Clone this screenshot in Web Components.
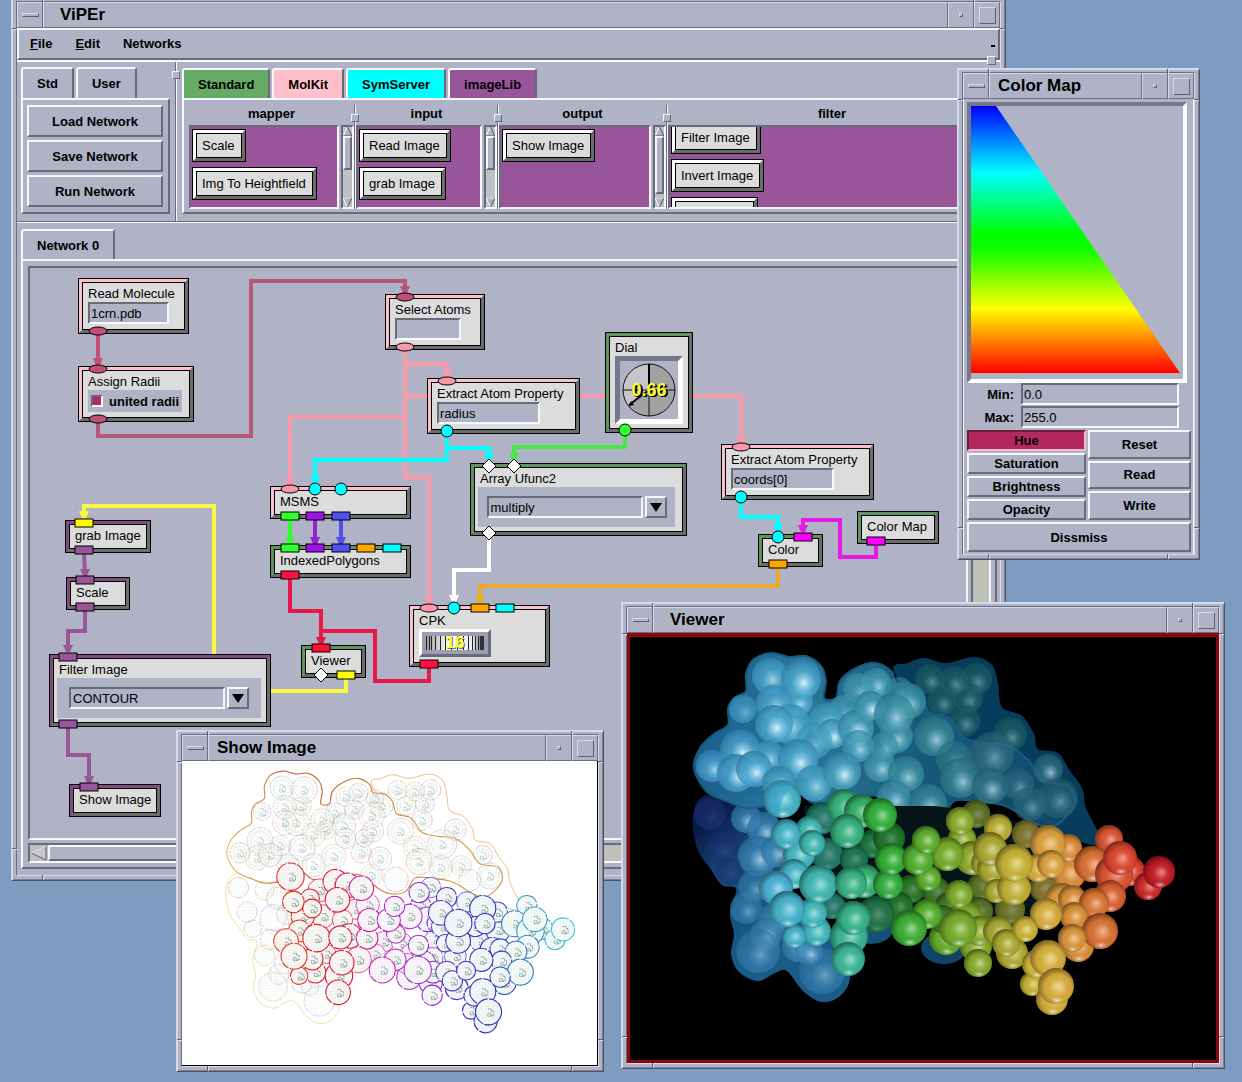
<!DOCTYPE html>
<html lang="en">
<head>
<meta charset="utf-8">
<title>ViPEr</title>
<style>
  :root {
    --panel: #afb3c5;
    --light: #f6f8ff;
    --dark: #686c7a;
    --rim: #d6d9ea;
    --node: #dcdcdc;
  }
  body {
    margin: 0;
    font: 13px/17px "Liberation Sans", Arial, sans-serif;
    color: #000;
  }
</style>
</head>
<body>
<desk-top>
  <mwm-window heading="ViPEr" style="left: 11px; right: 236px; top: -3px">
    <viper-app></viper-app>
  </mwm-window>

  <mwm-window heading="Color Map" compact style="right: 42px; top: 68px; width: 243px">
    <color-map></color-map>
  </mwm-window>

  <mwm-window heading="Show Image" compact style="left: 176px; top: 730px; width: 428px">
    <contour-view></contour-view>
  </mwm-window>

  <mwm-window heading="Viewer" style="left: 621px; right: 17px; top: 602px">
    <molecule-view></molecule-view>
  </mwm-window>
</desk-top>

<script>
// Attach an open shadow root and fill it from a template
function render(el, html) {
  const template = document.createElement("template");
  template.innerHTML = html;
  el.attachShadow({ mode: "open" }).appendChild(template.content.cloneNode(true));
}

class DeskTop extends HTMLElement {
  connectedCallback() {
    render(this, `
      <style>
        :host {
          display: block;
          position: relative;
          min-height: 100vh;
          overflow: hidden;
          background: #7c9dc0;
        }
      </style>
      <slot></slot>
    `);
  }
}
customElements.define("desk-top", DeskTop);

class MwmWindow extends HTMLElement {
  connectedCallback() {
    render(this, `
      <style>
        :host {
          display: block;
          position: absolute;
          box-sizing: border-box;
          padding: 3px 4px 4px;
          background: var(--panel);
          border: 1px solid;
          border-color: var(--rim) #4e5464 #4e5464 var(--rim);
          box-shadow: inset 1px 1px var(--rim), inset -1px -1px #7c8090;
        }
        .inner {
          border: 1px solid;
          border-color: #6a6e80 var(--rim) var(--rim) #6a6e80;
        }
        header {
          display: grid;
          grid-template-columns: 26px 1fr 26px 26px;
          height: 26px;
        }
        header > * {
          box-sizing: border-box;
          margin: 0;
          padding: 0;
          display: flex;
          align-items: center;
          justify-content: center;
          background: var(--panel);
          border: 1px solid;
          border-color: var(--rim) #6a6e80 #6a6e80 var(--rim);
        }
        h1 {
          justify-content: flex-start;
          padding-left: 16px;
          font: bold 17px/20px "Liberation Sans", Arial, sans-serif;
        }
        :host([compact]) h1 { padding-left: 8px; }
        i {
          box-sizing: border-box;
          border: 1px solid;
          border-color: var(--rim) #5c6070 #5c6070 var(--rim);
        }
        .bar { width: 17px; height: 4px; }
        .dot { width: 4px; height: 4px; }
        .box { width: 17px; height: 17px; }
        /* resize handle marks at the corners of the frame */
        .mark { position: absolute; background: #5c6070; }
        .mark.v { width: 1px; height: 5px; box-shadow: 1px 0 var(--rim); }
        .mark.h { width: 5px; height: 1px; box-shadow: 0 1px var(--rim); }
        .t { top: 0; } .b { bottom: 0; } .l { left: 0; } .r { right: 0; }
        .v.w { left: 30px; } .v.e { right: 31px; }
        .h.n { top: 30px; } .h.s { bottom: 31px; }
      </style>
      <div class="inner">
        <header>
          <button aria-label="Window menu"><i class="bar"></i></button>
          <h1></h1>
          <button aria-label="Minimize"><i class="dot"></i></button>
          <button aria-label="Maximize"><i class="box"></i></button>
        </header>
        <slot></slot>
      </div>
      <b class="mark v t w"></b><b class="mark v t e"></b>
      <b class="mark v b w"></b><b class="mark v b e"></b>
      <b class="mark h l n"></b><b class="mark h r n"></b>
      <b class="mark h l s"></b><b class="mark h r s"></b>
    `);
    this.shadowRoot.querySelector("h1").textContent = this.getAttribute("heading");
  }
}
customElements.define("mwm-window", MwmWindow);

class MotifButton extends HTMLElement {
  connectedCallback() {
    render(this, `
      <style>
        :host { display: grid; }
        button {
          font: bold 13px/17px "Liberation Sans", Arial, sans-serif;
          padding: 0;
          color: #000;
          background: var(--panel);
          border: 2px solid;
          border-color: var(--light) var(--dark) var(--dark) var(--light);
        }
        :host([pressed]) button {
          background: #b3295e;
          border-color: #701c3c #f4b8cc #f4b8cc #701c3c;
        }
      </style>
      <button><slot></slot></button>
    `);
  }
}
customElements.define("motif-button", MotifButton);

class MotifTab extends HTMLElement {
  connectedCallback() {
    render(this, `
      <style>
        :host { display: block; }
        button {
          display: block;
          box-sizing: border-box;
          height: 100%;
          padding: 0 14px;
          font: bold 13px/17px "Liberation Sans", Arial, sans-serif;
          color: #000;
          background: var(--tab, var(--panel));
          border: 2px solid;
          border-color: var(--light) var(--dark) transparent var(--light);
          border-bottom: 0;
          border-radius: 3px 3px 0 0;
        }
      </style>
      <button role="tab"><slot></slot></button>
    `);
  }
}
customElements.define("motif-tab", MotifTab);

class TabPage extends HTMLElement {
  connectedCallback() {
    render(this, `
      <style>
        :host { display: flex; flex-direction: column; min-width: 0; }
        .tabs { display: flex; gap: 2px; height: var(--tab-height, 31px); }
        .page {
          flex: 1;
          min-width: 0;
          border: 2px solid;
          border-color: var(--light) var(--dark) var(--dark) var(--light);
        }
      </style>
      <div class="tabs" role="tablist"><slot name="tab"></slot></div>
      <div class="page"><slot></slot></div>
    `);
  }
}
customElements.define("tab-page", TabPage);

// Vertical scrollbar of a library pane, "size" is the thumb share in percent
class PaneScroll extends HTMLElement {
  connectedCallback() {
    render(this, `
      <style>
        :host {
          display: flex;
          flex-direction: column;
          box-sizing: border-box;
          width: 13px;
          background: #bfc1c4;
          border: 2px solid;
          border-color: var(--dark) var(--light) var(--light) var(--dark);
        }
        svg { display: block; width: 9px; height: 9px; flex: none; }
        .trough { flex: 1; }
        .thumb {
          box-sizing: border-box;
          height: ${this.getAttribute("size")}%;
          background: var(--panel);
          border: 2px solid;
          border-color: var(--light) var(--dark) var(--dark) var(--light);
        }
      </style>
      <svg viewBox="0 0 9 9"><path d="M4.500 0 0 9h9z" fill="#afb3c5"/><path d="M4.500 0 0 9" stroke="#fff"/><path d="M4.500 0 9 9H0" stroke="#555" fill="none"/></svg>
      <div class="trough"><div class="thumb"></div></div>
      <svg viewBox="0 0 9 9"><path d="M4.500 9 0 0h9z" fill="#afb3c5"/><path d="M4.500 9 0 0h9" stroke="#fff" fill="none"/><path d="M4.500 9 9 0" stroke="#555"/></svg>
    `);
  }
}
customElements.define("pane-scroll", PaneScroll);

class LibraryPane extends HTMLElement {
  connectedCallback() {
    render(this, `
      <style>
        :host { display: grid; grid-template-columns: 1fr auto; grid-template-rows: 20px 84px; column-gap: 2px; min-width: 0; }
        h2 { grid-column: 1 / -1; margin: 0; font: bold 13px/17px "Liberation Sans", Arial, sans-serif; text-align: center; }
        .list {
          min-width: 0;
          overflow: hidden;
          background: #995599;
          border: 2px solid;
          border-color: var(--dark) var(--light) var(--light) var(--dark);
        }
        .items {
          display: flex;
          flex-direction: column;
          align-items: flex-start;
          gap: 5px;
          padding: 2px 1px;
          margin-top: -${this.getAttribute("scrolled") || 0}px;
        }
      </style>
      <h2>${this.getAttribute("heading")}</h2>
      <div class="list"><div class="items"><slot></slot></div></div>
      <slot name="scroll"></slot>
    `);
  }
}
customElements.define("library-pane", LibraryPane);

class LibraryNode extends HTMLElement {
  connectedCallback() {
    render(this, `
      <style>
        :host { display: block; flex: none; border: 1px solid #000; }
        button {
          display: block;
          padding: 0;
          font: 13px/23px "Liberation Sans", Arial, sans-serif;
          color: #000;
          background: none;
          border: 3px solid;
          border-color: #fff #6c6c6c #6c6c6c #fff;
        }
        span { display: block; min-width: 66px; min-height: 23px; padding: 0 6px 0 5px; background: var(--node); border: 1px solid #000; }
        :host([short]) span { min-width: 0; }
      </style>
      <button><span><slot></slot></span></button>
    `);
  }
}
customElements.define("library-node", LibraryNode);

// Separator with the small square handle
class PaneSash extends HTMLElement {
  connectedCallback() {
    render(this, `
      <style>
        :host { display: block; position: relative; box-sizing: border-box; width: 2px; background: linear-gradient(90deg, var(--dark) 50%, var(--light) 50%); }
        i {
          position: absolute;
          left: -3px;
          top: 9px;
          box-sizing: border-box;
          width: 8px;
          height: 8px;
          background: var(--panel);
          border: 1px solid;
          border-color: var(--light) var(--dark) var(--dark) var(--light);
        }
      </style>
      <i></i>
    `);
  }
}
customElements.define("pane-sash", PaneSash);

// Sunken text box; with a label it lays itself out as a form row
class TextField extends HTMLElement {
  connectedCallback() {
    const label = this.getAttribute("label");
    render(this, `
      <style>
        :host { display: grid; grid-template-columns: ${label ? "47px 1fr" : "1fr"}; align-items: center; column-gap: 7px; }
        label { font-weight: bold; text-align: right; }
        input {
          box-sizing: border-box;
          width: 100%;
          min-width: 0;
          height: 22px;
          margin: 0;
          padding: 0 1px;
          font: 13px/17px "Liberation Sans", Arial, sans-serif;
          color: #000;
          background: var(--panel);
          border: 2px solid;
          border-color: var(--dark) var(--light) var(--light) var(--dark);
          border-radius: 0;
        }
      </style>
      ${label ? `<label for="f">${label}</label>` : ""}
      <input id="f" value="${this.getAttribute("value") || ""}">
    `);
    if (!label) this.shadowRoot.querySelector("input").ariaLabel = this.getAttribute("name");
  }
}
customElements.define("text-field", TextField);

class ComboBox extends HTMLElement {
  connectedCallback() {
    render(this, `
      <style>
        :host { display: grid; box-sizing: border-box; grid-template-columns: 156px 22px; justify-content: center; column-gap: 2px; padding: 9px 0; margin-left: -2px; background: var(--panel); }
        select {
          appearance: none;
          box-sizing: border-box;
          height: 22px;
          margin: 0;
          padding: 0 2px;
          font: 13px/17px "Liberation Sans", Arial, sans-serif;
          color: #000;
          background: var(--panel);
          border: 2px solid;
          border-color: var(--dark) var(--light) var(--light) var(--dark);
          border-radius: 0;
        }
        button {
          display: grid;
          place-items: center;
          padding: 0;
          background: var(--panel);
          border: 2px solid;
          border-color: var(--light) var(--dark) var(--dark) var(--light);
        }
      </style>
      <select aria-label="${this.getAttribute("name")}"><option>${this.getAttribute("value")}</option></select>
      <button aria-label="Open list"><svg width="12" height="9"><path d="M0 0h12L6 9z"/></svg></button>
    `);
  }
}
customElements.define("combo-box", ComboBox);

class CheckBox extends HTMLElement {
  connectedCallback() {
    render(this, `
      <style>
        :host { display: block; background: var(--panel); }
        label { display: flex; align-items: center; gap: 6px; height: 22px; padding-left: 3px; font-weight: bold; white-space: nowrap; }
        input {
          appearance: none;
          box-sizing: border-box;
          width: 12px;
          height: 12px;
          margin: 0;
          border: 2px solid;
          border-color: var(--dark) #fff #fff var(--dark);
        }
        input:checked { background: #b3295e; }
      </style>
      <label><input type="checkbox" checked><slot></slot></label>
    `);
  }
}
customElements.define("check-box", CheckBox);

class ValueDial extends HTMLElement {
  connectedCallback() {
    render(this, `
      <style>
        :host {
          display: grid;
          place-items: center;
          box-sizing: border-box;
          width: 68px;
          height: 68px;
          background: var(--panel);
          border: 5px solid;
          border-color: #747888 #fff #fff #747888;
        }
        svg, span { grid-area: 1 / 1; }
        span { font: bold 18px/20px "Liberation Sans", Arial, sans-serif; color: #ff3; text-shadow: 1px 1px #000, 2px 1px #000; }
      </style>
      <svg width="54" height="54" viewBox="0 0 54 54">
        <circle cx="27" cy="27" r="26" fill="#c6c6c8"/>
        <path d="M27 27V1a26 26 0 1 1-20 43z" fill="#a2a2a2"/>
        <circle cx="27" cy="27" r="26" fill="none" stroke="#111"/>
        <path d="M27 1v52M1 27h52" stroke="#111"/>
        <path d="M27 27 7 42M27 1v26" stroke="#000" stroke-width="2"/>
        <path d="m7 43 5-1-3-4z"/>
      </svg>
      <span>${this.getAttribute("value")}</span>
    `);
  }
}
customElements.define("value-dial", ValueDial);

class ThumbWheel extends HTMLElement {
  connectedCallback() {
    const bars = [0, 3, 5, 9, 14, 19, 25, 31, 37, 42, 46, 49, 52]
      .map((x) => `<rect x="${x}" width="1" height="14" fill="#222"/>`).join("");
    render(this, `
      <style>
        :host {
          display: grid;
          place-items: center;
          box-sizing: border-box;
          width: 72px;
          height: 28px;
          background: #9a9eb0;
          border: 3px solid;
          border-color: #fff var(--dark) var(--dark) #fff;
        }
        svg, span { grid-area: 1 / 1; }
        span { font: bold 17px/20px "Liberation Sans", Arial, sans-serif; color: #ff3; text-shadow: 1px 1px #666; }
      </style>
      <svg width="58" height="14">
        <defs><linearGradient id="w"><stop offset="0" stop-color="#999"/><stop offset=".4" stop-color="#fff"/><stop offset=".8" stop-color="#eee"/><stop offset="1" stop-color="#555"/></linearGradient></defs>
        <rect width="58" height="14" fill="url(#w)"/>${bars}
        <rect x="54" width="4" height="14" fill="#333"/>
      </svg>
      <span>${this.getAttribute("value")}</span>
    `);
  }
}
customElements.define("thumb-wheel", ThumbWheel);

const PORT_SHAPES = {
  oval: '<ellipse cx="10" cy="8" rx="9" ry="4"/>',
  circle: '<circle cx="10" cy="8" r="6"/>',
  diamond: '<path d="m10 1 7 7-7 7-7-7z"/>',
  rect: '<rect x="1" y="4" width="18" height="8"/>',
};

// A node of the network. Ports are listed as "shape:x:color", x from the node's left edge
class FlowNode extends HTMLElement {
  connectedCallback() {
    const port = (side) => (spec) => {
      const [shape, x, color] = spec.split(":");
      return `<svg class="port ${side}" style="left: ${x - 11}px" fill="${color}" stroke="#000">${PORT_SHAPES[shape]}</svg>`;
    };
    const list = (name) => (this.getAttribute(name) || "").split(" ").filter(Boolean);
    render(this, `
      <style>
        :host {
          display: block;
          position: absolute;
          box-sizing: border-box;
          width: ${this.getAttribute("w")}px;
          height: ${this.getAttribute("h")}px;
          border: 1px solid #000;
        }
        .bevel {
          box-sizing: border-box;
          height: 100%;
          border: 3px solid;
          border-color: var(--edge, #5f9460) #6c6c6c #6c6c6c var(--edge, #5f9460);
        }
        .body {
          box-sizing: border-box;
          height: 100%;
          padding: 2px 5px;
          background: var(--node);
          border: 1px solid #000;
        }
        h3 { margin: 0; font: 13px/17px "Liberation Sans", Arial, sans-serif; white-space: nowrap; }
        .port { position: absolute; width: 20px; height: 16px; }
        .top { top: -6px; }
        .bottom { bottom: -6px; }
      </style>
      <div class="bevel"><div class="body"><h3>${this.getAttribute("heading")}</h3><slot></slot></div></div>
      ${list("in").map(port("top")).join("")}
      ${list("out").map(port("bottom")).join("")}
    `);
  }
}
customElements.define("flow-node", FlowNode);

// Connections in sheet coordinates, "!" at the end means no arrow head
const WIRES = [
  ["#c05078", "98,332 98,365"],
  ["#b85878", "98,420 98,436 251,436 251,281 405,281 405,293"],
  ["#f898a8", "405,348 405,364 447,364 447,377"],
  ["#f898a8", "405,364 405,396 741,396 741,443"],
  ["#f898a8", "405,396 405,417 290,417 290,485"],
  ["#f898a8", "405,396 405,477 429,477 429,604"],
  ["#00ffff", "447,431 447,460 315,460 315,483"],
  ["#00ffff", "447,448 489,448 489,460"],
  ["#48e848", "625,430 625,447 514,447 514,460"],
  ["#ffffff", "489,533 489,570 454,570 454,602"],
  ["#30ff30", "290,516 290,544"],
  ["#9820d8", "315,516 315,544"],
  ["#5050f0", "341,516 341,544"],
  ["#e81848", "290,575 290,611 321,611 321,644"],
  ["#e81848", "321,631 375,631 375,681 429,681 429,664!"],
  ["#f8f840", "346,675 346,691 214,691 214,506 84,506 84,518"],
  ["#985898", "84,550 85,576"],
  ["#985898", "85,607 85,631 68,631 68,652"],
  ["#985898", "68,724 68,755 89,755 89,783"],
  ["#00ffff", "741,497 741,517 778,517 778,531"],
  ["#e818e8", "876,541 876,557 840,557 840,520 803,520 803,532"],
  ["#eca828", "778,564 778,586 480,586 480,603"],
];

class FlowCanvas extends HTMLElement {
  connectedCallback() {
    const sx = Number(this.getAttribute("scroll-x"));
    const sy = Number(this.getAttribute("scroll-y"));
    const wires = WIRES.map(([color, pts]) => {
      const line = pts.replace("!", "");
      let svg = `<polyline points="${line}" stroke="${color}"/>`;
      if (!pts.endsWith("!")) {
        const [x, y] = line.split(" ").pop().split(",").map(Number);
        svg += `<path d="M${x - 5} ${y - 7}h10l-3 7h-4z" fill="${color}"/>`;
      }
      return svg;
    }).join("");
    render(this, `
      <style>
        :host {
          display: block;
          position: relative;
          overflow: hidden;
          height: 570px;
          border: 2px solid;
          border-color: var(--dark) var(--light) var(--light) var(--dark);
        }
        svg { position: absolute; width: 100%; height: 100%; }
      </style>
      <svg fill="none" stroke-width="4"><g transform="translate(${-sx} ${-sy})">${wires}</g></svg>
      <slot></slot>
    `);
    for (const node of this.children) {
      node.style.left = node.getAttribute("x") - sx + "px";
      node.style.top = node.getAttribute("y") - sy + "px";
    }
  }
}
customElements.define("flow-canvas", FlowCanvas);

class ViperApp extends HTMLElement {
  connectedCallback() {
    render(this, `
      <style>
        :host { display: block; background: var(--panel); padding-bottom: 6px; }
        nav {
          display: flex;
          gap: 23px;
          align-items: center;
          box-sizing: border-box;
          height: 32px;
          padding: 0 3px 2px 11px;
          border: 2px solid;
          border-color: var(--light) var(--dark) var(--dark) var(--light);
        }
        nav button { padding: 0; border: 0; background: none; font: bold 13px/17px "Liberation Sans", Arial, sans-serif; color: #000; }
        nav i { width: 4px; height: 2px; margin: 6px 0 0 auto; background: #000; }
        .top {
          position: relative;
          display: grid;
          grid-template-columns: 153px 2px 1fr;
          column-gap: 5px;
          border-top: 2px solid var(--light);
          border-bottom: 1px solid var(--dark);
        }
        /* handle that resizes the library against the menu bar */
        .grip {
          position: absolute;
          right: 4px;
          top: -6px;
          box-sizing: border-box;
          width: 9px;
          height: 9px;
          background: var(--panel);
          border: 1px solid;
          border-color: var(--light) var(--dark) var(--dark) var(--light);
        }
        .std { margin: 5px 0 7px; }
        .left { padding-left: 4px; }
        .actions { display: grid; grid-auto-rows: 32px; gap: 3px; padding: 5px 5px 5px 4px; }
        .lib { margin: 6px 2px 7px 0; --tab-height: 30px; }
        .panes { display: grid; grid-template-columns: 165px 2px 141px 2px 167px 2px 1fr; padding: 5px 0 3px 5px; }
        .net { padding: 6px 3px 0 4px; border-top: 1px solid var(--light); --tab-height: 30px; }
        .sheet { display: grid; grid-template-columns: 1fr 20px; gap: 3px; padding: 5px 4px 4px 5px; }
        .bar {
          display: flex;
          height: 16px;
          background: #c0c0ba;
          border: 2px solid;
          border-color: var(--dark) var(--light) var(--light) var(--dark);
        }
        .bar.v { height: auto; }
        .bar svg { flex: none; }
        .bar div {
          width: 50%;
          background: var(--panel);
          border: 2px solid;
          border-color: var(--light) var(--dark) var(--dark) var(--light);
        }
        flow-node.pink { --edge: #f8c0cc; }
        flow-node.plum { --edge: #804c80; }
      </style>
      <nav>
        <button><u>F</u>ile</button><button><u>E</u>dit</button><button>Networks</button><i></i>
      </nav>
      <div class="top">
        <div class="left">
          <tab-page class="std">
            <motif-tab slot="tab">Std</motif-tab>
            <motif-tab slot="tab">User</motif-tab>
            <div class="actions">
              <motif-button>Load Network</motif-button>
              <motif-button>Save Network</motif-button>
              <motif-button>Run Network</motif-button>
            </div>
          </tab-page>
        </div>
        <pane-sash></pane-sash>
        <tab-page class="lib">
          <motif-tab slot="tab" style="--tab: #66aa66">Standard</motif-tab>
          <motif-tab slot="tab" style="--tab: #ffc0cb">MolKit</motif-tab>
          <motif-tab slot="tab" style="--tab: #00ffff">SymServer</motif-tab>
          <motif-tab slot="tab" style="--tab: #995599">imageLib</motif-tab>
          <div class="panes">
            <library-pane heading="mapper">
              <library-node short>Scale</library-node>
              <library-node>Img To Heightfield</library-node>
              <pane-scroll slot="scroll" size="55"></pane-scroll>
            </library-pane>
            <pane-sash></pane-sash>
            <library-pane heading="input">
              <library-node>Read Image</library-node>
              <library-node>grab Image</library-node>
              <pane-scroll slot="scroll" size="55"></pane-scroll>
            </library-pane>
            <pane-sash></pane-sash>
            <library-pane heading="output">
              <library-node>Show Image</library-node>
              <pane-scroll slot="scroll" size="94"></pane-scroll>
            </library-pane>
            <pane-sash></pane-sash>
            <library-pane heading="filter" scrolled="8">
              <library-node>Filter Image</library-node>
              <library-node>Invert Image</library-node>
              <library-node></library-node>
              <pane-scroll slot="scroll" size="40"></pane-scroll>
            </library-pane>
          </div>
        </tab-page>
        <i class="grip"></i>
      </div>
      <div class="net">
        <tab-page>
          <motif-tab slot="tab">Network 0</motif-tab>
          <div class="sheet">
            <flow-canvas scroll-x="30" scroll-y="268">
              <flow-node class="pink" heading="Read Molecule" x="78" y="278" w="111" h="56" out="oval:20:#c05078">
                <text-field name="File" value="1crn.pdb" style="width: 81px"></text-field>
              </flow-node>
              <flow-node class="pink" heading="Assign Radii" x="78" y="366" w="116" h="56" in="oval:20:#c05078" out="oval:20:#c05078">
                <check-box style="width: 94px">united radii</check-box>
              </flow-node>
              <flow-node class="pink" heading="Select Atoms" x="385" y="294" w="100" h="56" in="oval:20:#c05078" out="oval:20:#f898a8">
                <text-field name="Atoms" style="width: 66px"></text-field>
              </flow-node>
              <flow-node class="pink" heading="Extract Atom Property" x="427" y="378" w="153" h="56" in="oval:20:#f898a8" out="circle:20:#00ffff">
                <text-field name="Property" value="radius" style="width: 103px"></text-field>
              </flow-node>
              <flow-node heading="Dial" x="605" y="332" w="88" h="101" out="circle:20:#30ff30">
                <value-dial value="0.66"></value-dial>
              </flow-node>
              <flow-node heading="Array Ufunc2" x="470" y="463" w="217" h="73" in="diamond:19:#fff diamond:44:#fff" out="diamond:19:#fff">
                <combo-box name="Function" value="multiply" style="width: 197px"></combo-box>
              </flow-node>
              <flow-node class="pink" heading="Extract Atom Property" x="721" y="444" w="153" h="56" in="oval:20:#f898a8" out="circle:20:#00ffff">
                <text-field name="Property" value="coords[0]" style="width: 103px"></text-field>
              </flow-node>
              <flow-node heading="Color Map" x="857" y="511" w="82" h="33" out="rect:19:#ff00ff"></flow-node>
              <flow-node heading="Color" x="758" y="534" w="65" h="33" in="circle:20:#00ffff rect:45:#ff00ff" out="rect:20:#ffa500"></flow-node>
              <flow-node class="pink" heading="MSMS" x="270" y="486" w="141" h="33" in="oval:20:#f898a8 circle:45:#00ffff circle:71:#00ffff" out="rect:20:#30ff30 rect:45:#a010e8 rect:71:#5050f0"></flow-node>
              <flow-node heading="IndexedPolygons" x="270" y="545" w="141" h="33" in="rect:20:#30ff30 rect:45:#a010e8 rect:71:#5050f0 rect:96:#ffa500 rect:122:#00ffff" out="rect:20:#ff1040"></flow-node>
              <flow-node class="pink" heading="CPK" x="409" y="605" w="141" h="62" in="oval:20:#f898a8 circle:45:#00ffff rect:71:#ffa500 rect:96:#00ffff" out="rect:20:#ff1040">
                <thumb-wheel value="16"></thumb-wheel>
              </flow-node>
              <flow-node heading="Viewer" x="301" y="645" w="65" h="33" in="rect:20:#ff1030" out="diamond:20:#fff rect:45:#ffff00"></flow-node>
              <flow-node class="plum" heading="grab Image" x="65" y="520" w="86" h="33" in="rect:19:#ffff00" out="rect:19:#995599"></flow-node>
              <flow-node class="plum" heading="Scale" x="66" y="577" w="64" h="33" in="rect:19:#995599" out="rect:19:#995599"></flow-node>
              <flow-node class="plum" heading="Filter Image" x="49" y="654" w="222" h="73" in="rect:19:#995599" out="rect:19:#995599">
                <combo-box name="Filter" value="CONTOUR" style="width: 204px"></combo-box>
              </flow-node>
              <flow-node class="plum" heading="Show Image" x="69" y="784" w="92" h="33" in="rect:20:#995599"></flow-node>
            </flow-canvas>
            <div class="bar v"></div>
            <div class="bar">
              <svg width="18" height="16" viewBox="0 0 18 16"><path d="M1 8 16 1v14z" fill="#c6c8cc" stroke="#5c6070"/><path d="M1 8 16 1" stroke="#fff"/></svg>
              <div></div>
            </div>
          </div>
        </tab-page>
      </div>
    `);
  }
}
customElements.define("viper-app", ViperApp);

class ColorMap extends HTMLElement {
  connectedCallback() {
    render(this, `
      <style>
        :host { display: block; padding: 3px 2px 2px 3px; background: var(--panel); border-left: 1px solid var(--light); border-right: 1px solid var(--light); }
        svg {
          display: block;
          box-sizing: border-box;
          width: calc(100% - 4px);
          border: 4px solid;
          border-color: #747888 #fff #fff #747888;
        }
        .fields { display: grid; gap: 1px; padding: 0 12px 2px 0; }
        .buttons { display: grid; grid-template-columns: 119px 1fr; gap: 2px; }
        .modes { display: grid; grid-template-rows: repeat(4, 21px); gap: 2px; }
        .files { display: grid; grid-template-rows: repeat(3, 1fr); gap: 2px; }
        .all { grid-column: 1 / -1; height: 30px; }
      </style>
      <svg viewBox="0 0 212 273">
        <defs>
          <linearGradient id="hue" x2="0" y2="1">
            <stop offset="0" stop-color="#00f"/>
            <stop offset=".25" stop-color="#0ff"/>
            <stop offset=".48" stop-color="#0f0"/>
            <stop offset=".54" stop-color="#1f0"/>
            <stop offset=".76" stop-color="#ff0"/>
            <stop offset="1" stop-color="#f00"/>
          </linearGradient>
        </defs>
        <path d="M0 0h25l184 267H0z" fill="url(#hue)"/>
      </svg>
      <div class="fields">
        <text-field label="Min:" value="0.0"></text-field>
        <text-field label="Max:" value="255.0"></text-field>
      </div>
      <div class="buttons">
        <div class="modes">
          <motif-button pressed>Hue</motif-button>
          <motif-button>Saturation</motif-button>
          <motif-button>Brightness</motif-button>
          <motif-button>Opacity</motif-button>
        </div>
        <div class="files">
          <motif-button>Reset</motif-button>
          <motif-button>Read</motif-button>
          <motif-button>Write</motif-button>
        </div>
        <motif-button class="all">Dissmiss</motif-button>
      </div>
    `);
  }
}
customElements.define("color-map", ColorMap);

// Atoms as [x, y, radius], from back to front; a fourth value marks the ones deep inside
const ATOMS = [
  [823, 817, 16, 1], [828, 853, 16, 1], [873, 843, 14, 1], [890, 837, 16, 1], [912, 888, 14, 1],
  [937, 890, 14, 1], [983, 885, 14, 1], [980, 910, 14, 1], [1011, 908, 15, 1], [1045, 887, 14, 1],
  [1027, 833, 14, 1], [977, 813, 14, 1], [855, 858, 14, 1], [900, 905, 14, 1], [950, 905, 14, 1],
  [877, 913, 18, 1], [963, 838, 14], [833, 905, 13, 1], [817, 930, 15], [795, 935, 12], [845, 805, 17], [862, 810, 17],
  [1005, 870, 14, 1], [1070, 872, 17], [1069, 847, 14], [973, 857, 17], [985, 862, 13], [993, 867, 15],
  [850, 935, 19], [865, 880, 17], [947, 937, 17], [977, 945, 16], [979, 962, 14], [966, 918, 18], [980, 930, 15], [943, 918, 14, 1],
  [810, 828, 13], [800, 853, 16], [795, 873, 15], [787, 833, 15], [813, 842, 13], [783, 798, 19],
  [848, 830, 17], [881, 814, 17], [813, 912, 15], [819, 883, 19], [777, 887, 17], [788, 908, 18],
  [852, 882, 16], [889, 883, 15], [892, 858, 16], [948, 853, 17], [929, 877, 13], [919, 858, 16],
  [927, 839, 14], [961, 820, 14], [999, 827, 14], [991, 848, 17], [997, 890, 12], [1015, 887, 17],
  [1049, 842, 18], [1039, 867, 14], [1015, 862, 19], [1052, 863, 14],
  [854, 917, 17], [849, 958, 17], [928, 913, 15], [910, 927, 18], [959, 927, 19], [960, 893, 14],
  [1110, 838, 14], [1093, 863, 18], [1131, 870, 15], [1115, 873, 19], [1121, 857, 17],
  [1149, 885, 14], [1160, 871, 16], [1063, 900, 18], [1073, 898, 14], [1111, 895, 16], [1095, 902, 15],
  [1075, 915, 14], [1047, 913, 16], [1079, 945, 16], [999, 930, 15], [1013, 952, 16], [1007, 942, 14], [1026, 928, 13],
  [1101, 930, 18], [1033, 983, 12], [1037, 963, 14], [1049, 957, 18], [1073, 937, 14],
  [1053, 998, 16], [1057, 985, 18],
];

// Bumps of the molecular surface as [x, y, radius, brightness]
const SURFACE = [
  [711, 813, 14, -1], [723, 847, 14, -1], [731, 870, 12, -1], [747, 817, 13, 1], [765, 828, 15, 1], [759, 855, 18, 1], [778, 850, 14, 1],
  [747, 907, 14, 0], [755, 885, 14, 0], [775, 918, 14, 1], [767, 933, 14, 1], [759, 950, 20, 0], [799, 945, 14, 1], [823, 970, 21, 0], [810, 950, 12, 1],
  [931, 678, 13, 0], [977, 678, 14, 0], [969, 697, 13, 0], [943, 700, 13, 0], [955, 680, 13, 0], [965, 720, 14, 0],
  [1011, 733, 15, 0], [877, 682, 13, 1], [859, 687, 13, 0], [900, 690, 12, 0],
  [744, 708, 12, 0], [771, 675, 16, 1], [799, 700, 13, 1], [802, 678, 18, 2], [775, 702, 16, 1],
  [791, 723, 18, 1], [775, 723, 17, 2], [713, 765, 14, 1], [769, 755, 14, 1], [741, 748, 18, 2], [737, 772, 17, 2], [755, 768, 16, 2],
  [845, 710, 14, 0], [827, 720, 16, 1], [833, 733, 13, 2], [857, 727, 16, 2], [871, 705, 13, 2], [859, 745, 14, 1],
  [815, 740, 16, 0], [799, 758, 18, 2], [780, 782, 15, 2], [815, 782, 16, 1], [843, 770, 17, 2], [881, 765, 14, 1],
  [897, 735, 15, 1], [909, 700, 16, 1], [895, 713, 18, 1], [885, 745, 12, 0], [907, 773, 16, 1], [935, 735, 18, 1],
  [955, 758, 16, 0], [961, 777, 18, 1], [993, 753, 20, 0], [991, 785, 16, 1], [1019, 783, 14, 0],
  [1049, 768, 13, 1], [1059, 797, 18, 0], [1031, 803, 15, 0],
  [895, 796, 15, 1], [929, 802, 17, 1],
];

// Outline points of the surface: the lobe behind, the main one and the dark one at the lower left
const BACK_LOBE = [
  [895, 670], [909, 662], [925, 657], [947, 662], [975, 656], [993, 664], [999, 683], [1003, 706], [1023, 715], [1035, 733],
  [1039, 748], [1059, 752], [1071, 770], [1083, 787], [1087, 807], [1099, 830], [1110, 845], [1085, 842], [1055, 827], [1000, 790], [930, 720],
];
const MAIN_LOBE = [
  [755, 658], [773, 652], [790, 656], [807, 655], [822, 665], [827, 680], [825, 697], [837, 697], [841, 680], [857, 667],
  [877, 662], [893, 671], [897, 682], [912, 683], [924, 694], [930, 711], [950, 717], [964, 736], [985, 742], [1010, 745],
  [1030, 760], [1045, 780], [1070, 785], [1075, 805], [1055, 825], [1035, 822], [1020, 812],
  [1003, 804], [975, 800], [955, 800], [943, 818], [925, 822], [907, 816], [880, 796], [860, 796], [843, 800], [815, 802],
  [799, 792], [785, 800], [751, 807], [727, 800], [707, 790], [695, 767], [701, 747], [715, 733], [729, 724],
  [729, 708], [735, 697], [747, 690], [747, 673],
];
const LOW_LOBE = [
  [705, 795], [694, 815], [698, 847], [711, 867], [723, 884], [737, 888], [731, 913], [735, 933], [732, 953], [740, 971],
  [759, 980], [776, 972], [788, 970], [804, 990], [823, 1001], [841, 995], [851, 975], [840, 940], [800, 910], [780, 860],
  [775, 800], [740, 795],
];

// Smooth closed path through the points (Catmull-Rom)
function smooth(points) {
  const at = (i) => points[(i + points.length) % points.length];
  let d = `M${points[0]}`;
  points.forEach((p, i) => {
    const prev = at(i - 1), next = at(i + 1), after = at(i + 2);
    const c1 = [0, 1].map((k) => (p[k] + (next[k] - prev[k]) / 6).toFixed(1));
    const c2 = [0, 1].map((k) => (next[k] - (after[k] - p[k]) / 6).toFixed(1));
    d += `C${c1} ${c2} ${next}`;
  });
  return d + "z";
}

// Linear blend between the two stops around x
function ramp(stops, x) {
  let i = 1;
  while (i < stops.length - 1 && stops[i][0] < x) i++;
  const [x0, a] = stops[i - 1];
  const [x1, b] = stops[i];
  const t = Math.min(1, Math.max(0, (x - x0) / (x1 - x0)));
  return `rgb(${a.map((v, k) => Math.round(v + (b[k] - v) * t)).join(",")})`;
}

const BODY_STOPS = [
  [770, [74, 178, 214]], [805, [66, 186, 190]], [835, [58, 184, 152]], [865, [52, 176, 108]],
  [890, [50, 176, 52]], [925, [92, 176, 44]], [960, [132, 172, 44]], [995, [176, 170, 48]],
  [1020, [212, 184, 56]], [1045, [222, 170, 66]], [1075, [222, 132, 54]], [1100, [220, 104, 50]],
  [1125, [222, 62, 48]], [1160, [196, 24, 36]],
];
const SKIN_STOPS = [
  [700, [66, 150, 206]], [800, [74, 168, 206]], [870, [70, 158, 176]], [930, [48, 128, 136]],
  [990, [44, 102, 114]], [1060, [36, 88, 102]],
];

class MoleculeView extends HTMLElement {
  connectedCallback() {
    const low = ([x, y]) => y > 800 && x < 860;
    const far = (s) => !low(s) && s[0] > 925 && s[1] < 740 && s[3] === 0;
    const bump = (s) => {
      const [x, y, r, k] = s;
      const fill = k < 0 ? "#1c2c70" : low(s) ? "#3478ac" : far(s) ? "#185450" : ramp(SKIN_STOPS, x);
      return `
        <circle cx="${x}" cy="${y}" r="${r + 2}" fill="${fill}" opacity="${k < 1 ? 0.55 : 0.7}"/>
        <circle cx="${x}" cy="${y}" r="${r + 2}" fill="url(#bump)" opacity="${k < 0 ? 0.1 : [0.4, 0.7, 1][k]}"/>
        <ellipse cx="${x + 3}" cy="${y + 4}" rx="${r * 0.65}" ry="${r * 0.7}" fill="url(#glow)" opacity="${k < 0 ? 0.05 : [0.25, 0.5, 0.9][k]}"/>`;
    };
    const bumps = (test) => SURFACE.filter(test).map(bump).join("");
    const atoms = ATOMS.map(([x, y, r, deep]) => `
      <circle cx="${x}" cy="${y}" r="${r}" fill="${ramp(BODY_STOPS, x - (y - 850) * 0.15)}"/>
      <circle cx="${x}" cy="${y}" r="${r}" fill="url(#shade)"/>
      ${deep ? `<circle cx="${x}" cy="${y}" r="${r}" fill="#002018" opacity=".4"/>` : ""}
      <ellipse cx="${x + 1}" cy="${y + r * 0.8}" rx="${r * 0.4}" ry="${r * 0.22}" fill="url(#glow)" opacity="${deep ? 0.3 : 0.9}"/>`
    ).join("");
    render(this, `
      <style>
        :host { display: block; background: #000; border: 3px solid #8a080c; border-top-width: 4px; }
        svg { display: block; width: 100%; }
      </style>
      <svg viewBox="631 636 586 423" role="img" aria-label="Molecule">
        <defs>
          <radialGradient id="shade" cx=".54" cy=".58" r=".6" fx=".58" fy=".5">
            <stop offset="0" stop-color="#fff" stop-opacity=".5"/>
            <stop offset=".28" stop-color="#fff" stop-opacity=".14"/>
            <stop offset=".6" stop-color="#000" stop-opacity=".04"/>
            <stop offset="1" stop-color="#000" stop-opacity=".5"/>
          </radialGradient>
          <radialGradient id="bump" cx=".55" cy=".6" r=".6">
            <stop offset="0" stop-color="#a4e0f8" stop-opacity=".65"/>
            <stop offset=".5" stop-color="#5cb4d4" stop-opacity=".25"/>
            <stop offset="1" stop-color="#0e4c70" stop-opacity=".4"/>
          </radialGradient>
          <radialGradient id="glow">
            <stop offset="0" stop-color="#fff" stop-opacity=".8"/>
            <stop offset=".4" stop-color="#e8f8ff" stop-opacity=".35"/>
            <stop offset="1" stop-color="#e8f4ff" stop-opacity="0"/>
          </radialGradient>
          <linearGradient id="main" gradientUnits="userSpaceOnUse" x1="695" x2="1080">
            <stop offset="0" stop-color="#1e6894"/>
            <stop offset=".3" stop-color="#2c80a8"/>
            <stop offset=".55" stop-color="#1c6488"/>
            <stop offset="1" stop-color="#0c4668"/>
          </linearGradient>
          <linearGradient id="low" gradientUnits="userSpaceOnUse" x1="700" y1="830" x2="790" y2="930">
            <stop offset="0" stop-color="#0a1c4c"/>
            <stop offset=".35" stop-color="#144a78"/>
            <stop offset="1" stop-color="#1a5c88"/>
          </linearGradient>
        </defs>
        <ellipse cx="945" cy="947" rx="23" ry="16" fill="#0e4468"/>
        <ellipse cx="872" cy="928" rx="22" ry="15" fill="#155078"/>
        <path d="${smooth(BACK_LOBE)}" fill="#083c5c"/>
        ${bumps(far)}
        <path d="${smooth(LOW_LOBE)}" fill="url(#low)"/>
        ${bumps(low)}
        <path d="${smooth(MAIN_LOBE)}" fill="url(#main)" stroke="#1a6088" stroke-width="2" opacity=".92"/>
        ${bumps((s) => !low(s) && !far(s))}
        <path d="M805 805h130l70 8 60 40 10 40-40 20-60 10-120-15-50-20z" fill="#041418"/>
        ${atoms}
        <path d="M765 795a19 19 0 0 1 32-11q-16 6-17 32-13-6-15-21z" fill="#3c9cc8" opacity=".5"/>
      </svg>
    `);
  }
}
customElements.define("molecule-view", MoleculeView);

// Same molecule after the CONTOUR filter: inverted outlines on white
const LINE_STOPS = [
  [770, [224, 60, 30]], [830, [214, 24, 36]], [870, [214, 20, 90]], [900, [206, 30, 190]],
  [950, [168, 50, 206]], [1000, [70, 50, 190]], [1050, [30, 50, 190]], [1085, [50, 120, 190]],
  [1130, [50, 170, 200]], [1160, [50, 200, 210]],
];

class ContourView extends HTMLElement {
  connectedCallback() {
    const squiggle = (x, y, o) =>
      `<path d="M${x - 3} ${y - 4}h5v3h3v6h-4v-3h-4v4h7" stroke="#3c7058" opacity="${o}" stroke-dasharray="2 1"/>`;
    const bumps = SURFACE.map(([x, y, r], i) => `
      <circle cx="${x}" cy="${y}" r="${r}" fill="url(#dots)" stroke="${["#c87878", "#a890c8", "#90a890", "#d8a860"][i % 4]}" opacity=".6" stroke-dasharray="9 1 4 2"/>
      ${y < 800 ? `<circle cx="${x}" cy="${y}" r="${r - 5}" stroke="#c8dccc" stroke-dasharray="3 2"/>` + squiggle(x, y, 0.5) : ""}`
    ).join("");
    const atoms = ATOMS.map(([x, y, r, deep]) => {
      const color = ramp(LINE_STOPS, x - (y - 850) * 0.15);
      return `
      <circle cx="${x}" cy="${y}" r="${r}" fill="#fff"/>
      <circle cx="${x}" cy="${y}" r="${r}" fill="${color}" fill-opacity=".04"/>
      <circle cx="${x}" cy="${y}" r="${r}" fill="url(#dots)" stroke="${color}" stroke-width="${deep ? 1 : 1.5}" stroke-dasharray="34 2 12 1"/>
      ${squiggle(x + 2, y, 0.9)}`;
    }).join("");
    render(this, `
      <style>
        :host { display: block; background: #fff; border: 1px solid #000; border-width: 0 1px 1px 0; }
        svg { display: block; width: 100%; }
      </style>
      <svg viewBox="633 638 574 420" fill="none" role="img" aria-label="Contour image">
        <defs>
          <pattern id="dots" width="4" height="4" patternUnits="userSpaceOnUse">
            <path d="M0 0h4M0 0v4" stroke="#dfeae6"/>
          </pattern>
          <linearGradient id="line" gradientUnits="userSpaceOnUse" x1="695" x2="1000">
            <stop offset="0" stop-color="#e4b860"/>
            <stop offset=".3" stop-color="#c05c28"/>
            <stop offset="1" stop-color="#d89838"/>
          </linearGradient>
        </defs>
        <path d="${smooth(BACK_LOBE)}" stroke="#e0a860" fill="#fff"/>
        <path d="${smooth(LOW_LOBE)}" stroke="#ecd088" fill="#fff"/>
        <path d="${smooth(MAIN_LOBE)}" stroke="url(#line)" stroke-width="1.5" fill="#fff"/>
        ${bumps}
        ${atoms}
      </svg>
    `);
  }
}
customElements.define("contour-view", ContourView);
</script>
</body>
</html>
